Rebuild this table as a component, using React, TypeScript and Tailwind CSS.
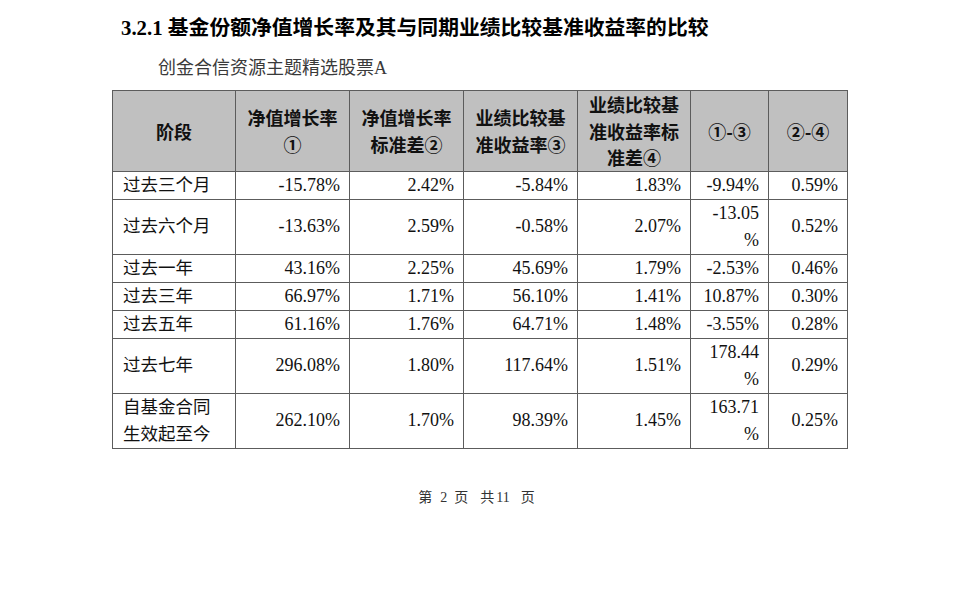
type Cell = string | string[];

const headers: string[][] = [
  ["阶段"],
  ["净值增长率", "①"],
  ["净值增长率", "标准差②"],
  ["业绩比较基", "准收益率③"],
  ["业绩比较基", "准收益率标", "准差④"],
  ["①-③"],
  ["②-④"],
];

const rows: { label: string[]; values: Cell[] }[] = [
  { label: ["过去三个月"], values: ["-15.78%", "2.42%", "-5.84%", "1.83%", "-9.94%", "0.59%"] },
  { label: ["过去六个月"], values: ["-13.63%", "2.59%", "-0.58%", "2.07%", ["-13.05", "%"], "0.52%"] },
  { label: ["过去一年"], values: ["43.16%", "2.25%", "45.69%", "1.79%", "-2.53%", "0.46%"] },
  { label: ["过去三年"], values: ["66.97%", "1.71%", "56.10%", "1.41%", "10.87%", "0.30%"] },
  { label: ["过去五年"], values: ["61.16%", "1.76%", "64.71%", "1.48%", "-3.55%", "0.28%"] },
  { label: ["过去七年"], values: ["296.08%", "1.80%", "117.64%", "1.51%", ["178.44", "%"], "0.29%"] },
  {
    label: ["自基金合同", "生效起至今"],
    values: ["262.10%", "1.70%", "98.39%", "1.45%", ["163.71", "%"], "0.25%"],
  },
];

const widths = ["w-[123px]", "w-[114px]", "w-[114px]", "w-[114px]", "w-[113px]", "w-[78px]", "w-[79px]"];

function Lines({ lines }: { lines: string[] }) {
  return (
    <>
      {lines.map((l, i) => (
        <div key={i}>{l}</div>
      ))}
    </>
  );
}

export default function App() {
  return (
    <div className="h-[592px] w-[960px] overflow-hidden bg-white font-['Liberation_Serif','Noto_Sans_CJK_SC',serif] text-[#111]">
      {/* Section title */}
      <div className="pl-[121px] pt-[14px] text-[20.8px] font-bold leading-[28px] text-black">
        3.2.1 基金份额净值增长率及其与同期业绩比较基准收益率的比较
      </div>
      <div className="mt-[13px] pl-[158px] text-[18px] leading-[26px] text-[#3a3a3a]">
        创金合信资源主题精选股票A
      </div>

      <table className="ml-[112px] mt-[9px] w-[736px] table-fixed border-collapse border border-[#5c5c5c]">
        <colgroup>
          {widths.map((w, i) => (
            <col key={i} className={w} />
          ))}
        </colgroup>
        <thead>
          <tr className="bg-[#c0c0c0]">
            {headers.map((h, i) => (
              <th
                key={i}
                className="border border-[#5c5c5c] p-0 text-center align-middle text-[18px] font-bold leading-[26.6px] font-['Noto_Sans_CJK_SC',sans-serif]"
              >
                <Lines lines={h} />
              </th>
            ))}
          </tr>
        </thead>
        <tbody>
          {rows.map((r, ri) => (
            <tr key={ri}>
              <td className="border border-[#5c5c5c] py-0 pl-[10px] pr-0 text-left align-middle text-[17.5px] leading-[27px]">
                <Lines lines={r.label} />
              </td>
              {r.values.map((v, vi) => (
                <td
                  key={vi}
                  className="border border-[#5c5c5c] py-0 pl-0 pr-[9px] text-right align-middle text-[18px] leading-[27px]"
                >
                  {Array.isArray(v) ? <Lines lines={v} /> : v}
                </td>
              ))}
            </tr>
          ))}
        </tbody>
      </table>

      {/* Page footer */}
      <div className="mt-[39px] flex justify-center pr-[7px] text-[14px] leading-[20px] text-[#333]">
        <span>第</span>
        <span className="ml-[8px]">2</span>
        <span className="ml-[7px]">页</span>
        <span className="ml-[12px]">共</span>
        <span className="ml-[2px]">11</span>
        <span className="ml-[11px]">页</span>
      </div>
    </div>
  );
}
